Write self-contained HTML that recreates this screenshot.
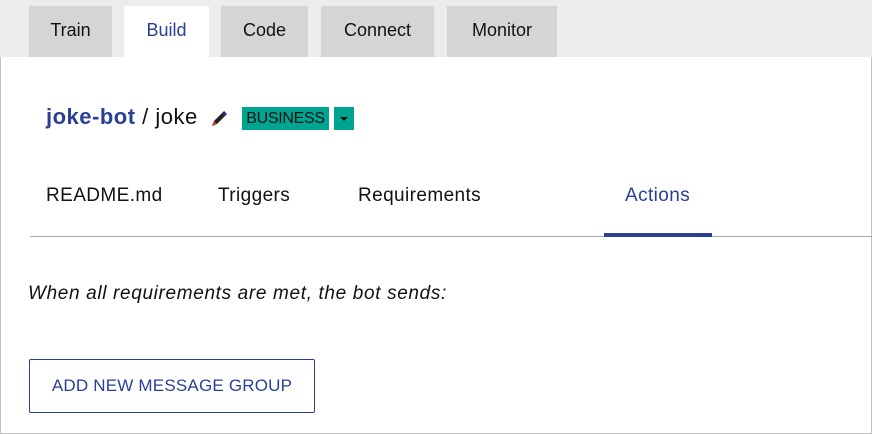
<!DOCTYPE html>
<html><head><meta charset="utf-8"><style>
body{margin:0;width:872px;height:435px;overflow:hidden;font-family:"Liberation Sans",Arial,sans-serif;background:#fff;}
.wrap{position:absolute;left:0;top:0;width:870px;height:433px;border:1px solid #c4c4c4;border-top:none;}
.bar{position:absolute;left:0;top:0;width:872px;height:57px;background:#ececec;}
.tab{position:absolute;top:6px;height:51px;background:#d6d5d5;font-size:18px;color:#111;text-align:center;line-height:48px;}
.tab.a{background:#fff;color:#2a3f96;}
.t{position:absolute;white-space:nowrap;}
.s{font-size:19px;letter-spacing:0.4px;top:185px;color:#111}
</style></head><body>
<div class="wrap"></div>
<div class="bar"></div>
<div class="tab" style="left:29px;width:83px">Train</div>
<div class="tab a" style="left:124px;width:85px">Build</div>
<div class="tab" style="left:221px;width:87px">Code</div>
<div class="tab" style="left:321px;width:113px">Connect</div>
<div class="tab" style="left:447px;width:110px">Monitor</div>
<div class="t" style="left:46px;top:104px;font-size:22px;letter-spacing:0.5px;color:#111"><b style="color:#2a3f96">joke-bot</b> / joke</div>
<svg style="position:absolute;left:209px;top:109px" width="20" height="20" viewBox="0 0 20 20"><path d="M3 17 L5 12 L14 3 L17 6 L8 15 Z" fill="#222"/><path d="M14 3 L17 6" stroke="#1e3a8a" stroke-width="3"/><path d="M3 17 L5 12 L8 15 Z" fill="#c0392b"/></svg>
<div class="t" style="left:242px;top:107px;width:87px;height:23px;background:#00a591;font-size:16px;line-height:23px;text-align:center;color:#111;letter-spacing:-0.3px">BUSINESS</div>
<div class="t" style="left:334px;top:107px;width:20px;height:23px;background:#00a591"><div style="position:absolute;left:6px;top:10px;border:4px solid transparent;border-top:4px solid #111;border-bottom:none"></div></div>
<div class="t s" style="left:46px">README.md</div>
<div class="t s" style="left:218px">Triggers</div>
<div class="t s" style="left:358px">Requirements</div>
<div class="t s" style="left:625px;color:#2a3f96">Actions</div>
<div class="t" style="left:30px;top:236px;width:842px;height:1px;background:#aaa"></div>
<div class="t" style="left:604px;top:233px;width:108px;height:4px;background:#2a3f96"></div>
<div class="t" style="left:28px;top:283px;font-size:19px;letter-spacing:0.65px;font-style:italic;color:#111">When all requirements are met, the bot sends:</div>
<div class="t" style="left:29px;top:359px;width:284px;height:52px;border:1px solid #2a3f96;border-radius:2px;font-size:17px;letter-spacing:0.2px;color:#2a3f96;text-align:center;line-height:52px">ADD NEW MESSAGE GROUP</div>
</body></html>
